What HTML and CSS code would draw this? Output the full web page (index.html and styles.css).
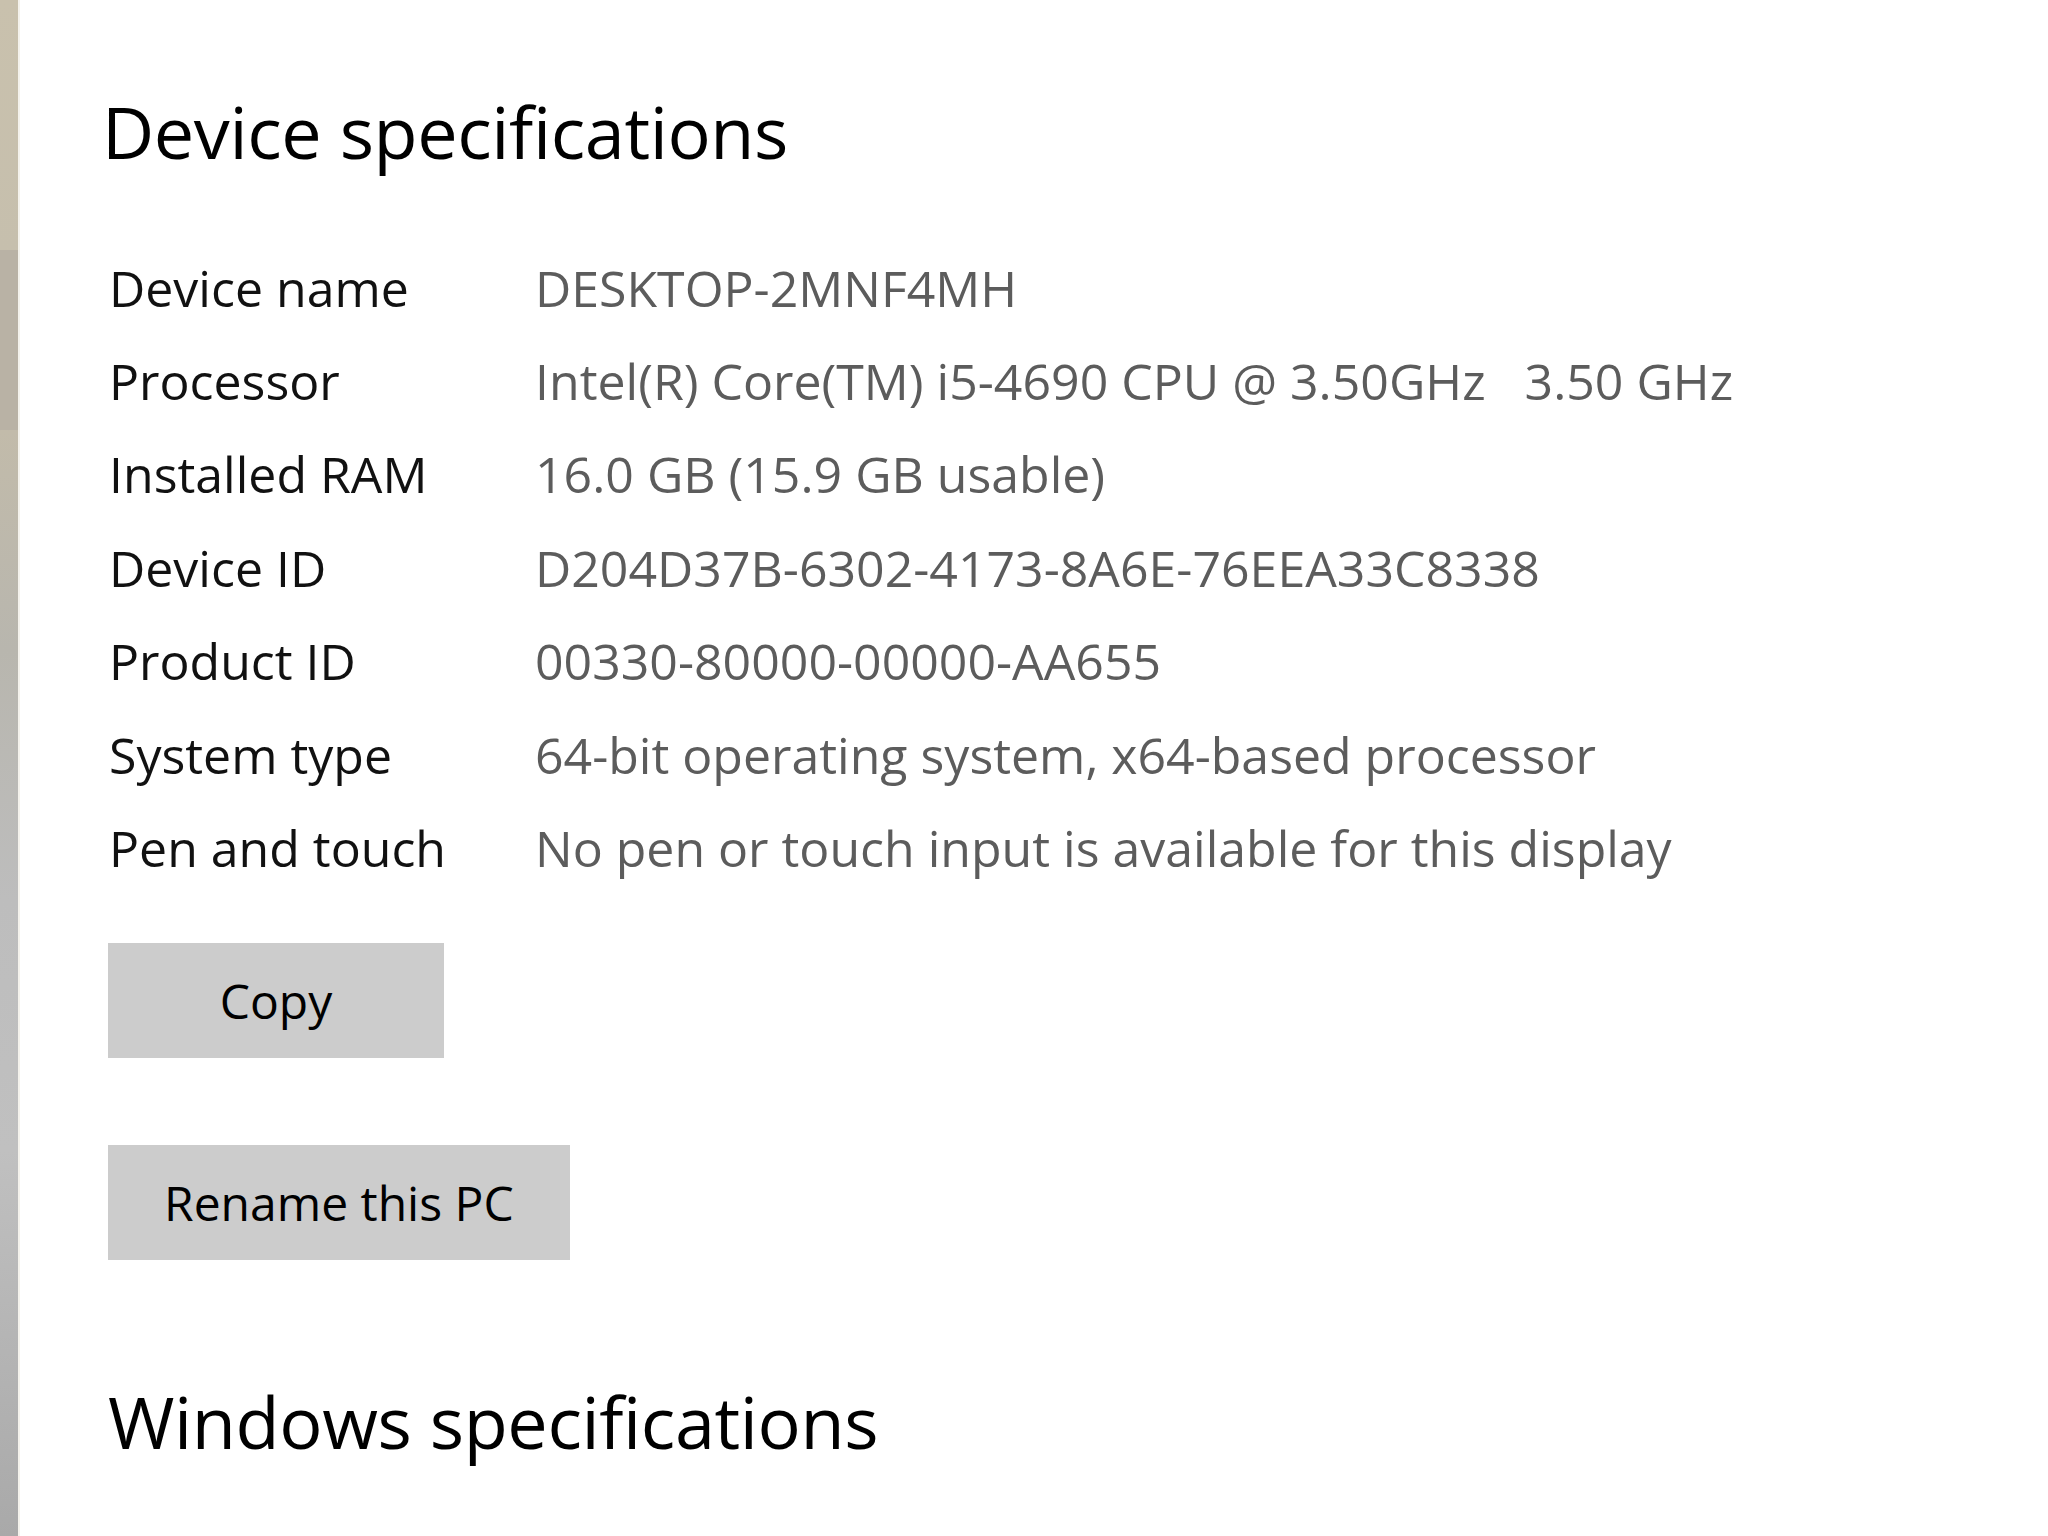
FILE: index.html
```html
<!DOCTYPE html>
<html lang="en">
<head>
    <meta charset="UTF-8">
    <meta name="viewport" content="width=device-width, initial-scale=1.0">
    <title>About</title>
    <link rel="stylesheet" href="styles.css">
</head>
<body>
    <div class="window">
        <div class="sidebar-edge"></div>
        <div class="content">
            <h1 class="section-title">Device specifications</h1>
            <div class="spec-list">
                <div class="spec-row"><span class="spec-label">Device name</span><span class="spec-value">DESKTOP-2MNF4MH</span></div>
                <div class="spec-row"><span class="spec-label">Processor</span><span class="spec-value">Intel(R) Core(TM) i5-4690 CPU @ 3.50GHz&nbsp;&nbsp;&nbsp;3.50 GHz</span></div>
                <div class="spec-row"><span class="spec-label">Installed RAM</span><span class="spec-value">16.0 GB (15.9 GB usable)</span></div>
                <div class="spec-row"><span class="spec-label">Device ID</span><span class="spec-value">D204D37B-6302-4173-8A6E-76EEA33C8338</span></div>
                <div class="spec-row"><span class="spec-label">Product ID</span><span class="spec-value">00330-80000-00000-AA655</span></div>
                <div class="spec-row"><span class="spec-label">System type</span><span class="spec-value">64-bit operating system, x64-based processor</span></div>
                <div class="spec-row"><span class="spec-label">Pen and touch</span><span class="spec-value">No pen or touch input is available for this display</span></div>
            </div>
            <div class="actions">
                <button type="button" class="btn btn-copy">Copy</button>
                <button type="button" class="btn">Rename this PC</button>
            </div>
            <h1 class="section-title second">Windows specifications</h1>
        </div>
    </div>
</body>
</html>
```

FILE: styles.css
```css
/* About page */
html, body {
    margin: 0;
    padding: 0;
    height: 100%;
    background-color: #fff;
    overflow: hidden;
}
body {
    font-family: "Open Sans", "Noto Sans", Arial, sans-serif;
    color: #000;
}
.window {
    display: flex;
    height: 100%;
}
.sidebar-edge {
    width: 18px;
    flex-shrink: 0;
    background: linear-gradient(to bottom,
        #c9c1ad 0px, #c6bfad 250px,
        #b9b2a5 250px, #b9b2a5 430px,
        #c2bbaa 430px, #b8b6ae 650px,
        #bdbdbd 900px, #c0c0c0 1150px, #a9a9a9 1536px);
    border-right: 2px solid #f4f2ec;
}
.content {
    padding-left: 82px;
    padding-top: 76px;
}
.section-title {
    font-size: 72px;
    font-weight: 400;
    line-height: 110px;
    margin: 0;
    letter-spacing: -0.4px;
}
.section-title.second {
    margin-top: 106px;
    margin-left: 6px;
}
.spec-list {
    margin-top: 55px;
    margin-left: 7px;
}
.spec-row {
    display: flex;
    height: 93.4px;
    align-items: center;
    font-size: 50px;
}
.spec-label {
    width: 426px;
    flex-shrink: 0;
    color: #111;
}
.spec-value {
    color: #5c5c5c;
}
.actions {
    display: flex;
    flex-direction: column;
    align-items: flex-start;
    gap: 87px;
    margin-top: 48px;
    margin-left: 6px;
}
.btn {
    font-family: inherit;
    font-size: 48px;
    height: 115px;
    padding: 0 56px;
    background-color: #cccccc;
    color: #000;
    border: none;
    border-radius: 0;
    cursor: pointer;
}
.btn-copy {
    width: 336px;
}
```
